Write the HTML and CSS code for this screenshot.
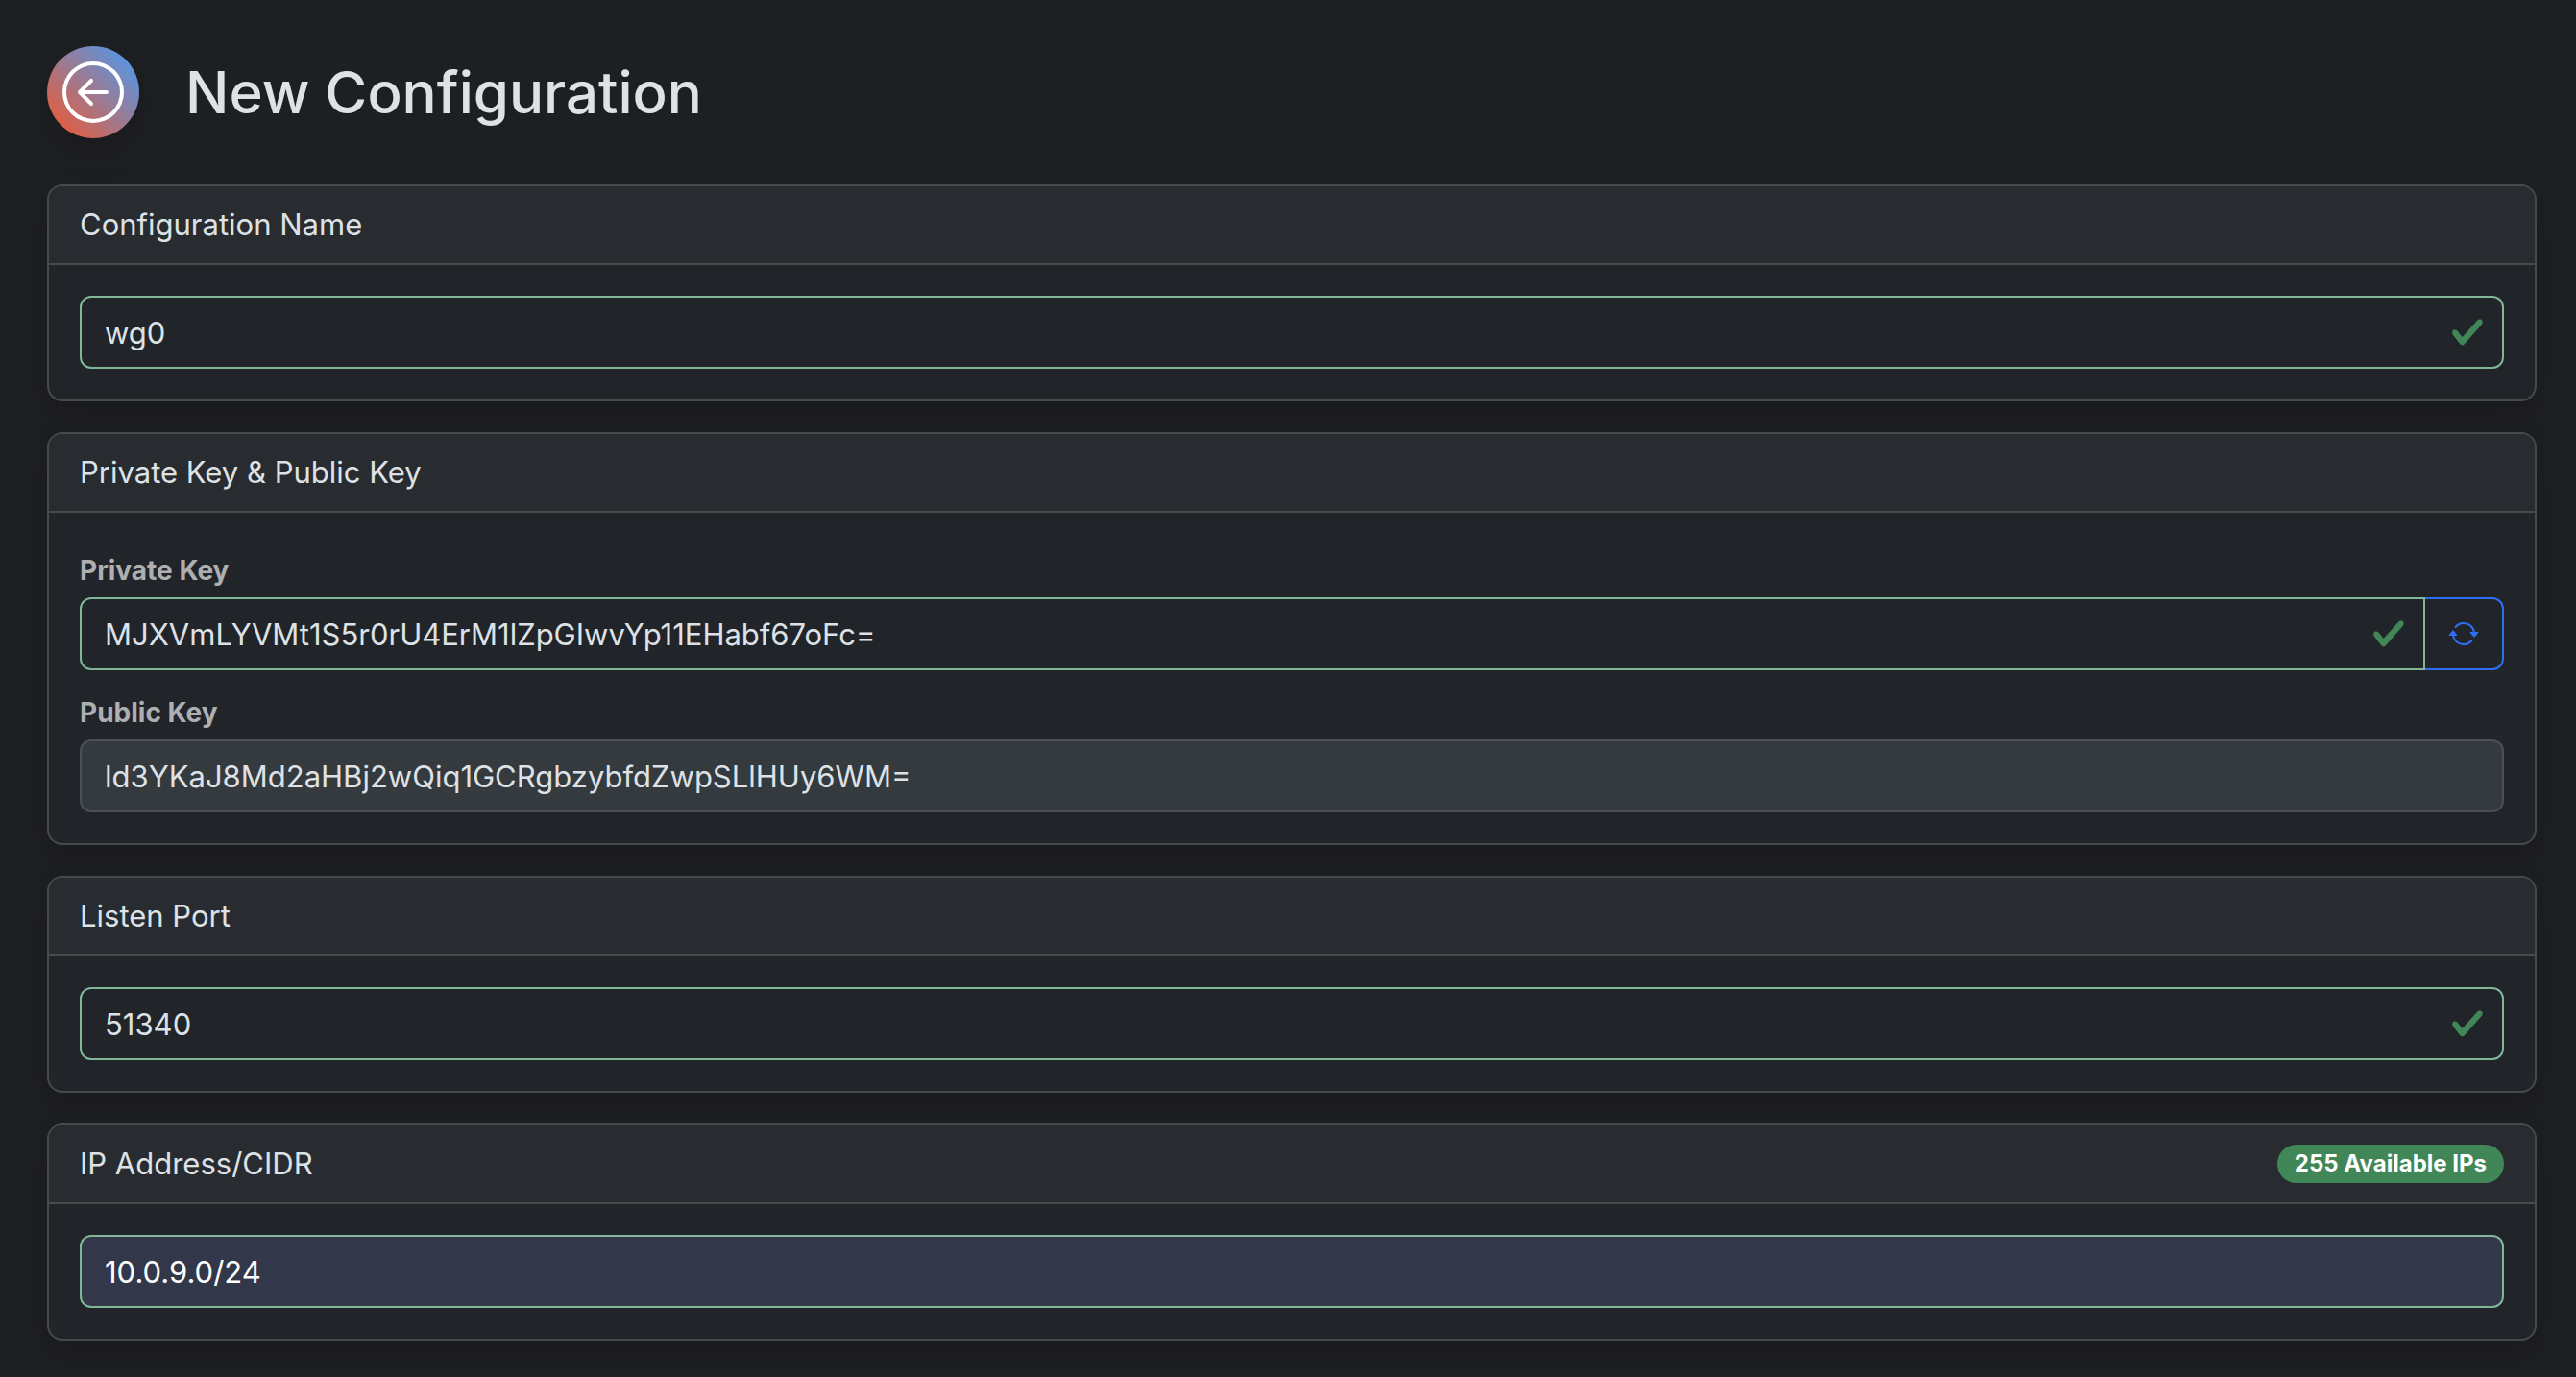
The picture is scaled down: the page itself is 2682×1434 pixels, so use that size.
FILE: index.html
```html
<!DOCTYPE html>
<html lang="en">
<head>
    <meta charset="UTF-8">
    <meta name="viewport" content="width=device-width, initial-scale=1.0">
    <title>New Configuration</title>
    <link rel="stylesheet" href="styles.css">
</head>
<body>
    <main class="container">
        <div class="page-header">
            <a href="#" class="back-btn" aria-label="Back">
                <svg viewBox="0 0 16 16" fill="currentColor">
                    <path fill-rule="evenodd" d="M1 8a7 7 0 1 0 14 0A7 7 0 0 0 1 8m15 0A8 8 0 1 1 0 8a8 8 0 0 1 16 0m-4.5-.5a.5.5 0 0 1 0 1H5.707l2.147 2.146a.5.5 0 0 1-.708.708l-3-3a.5.5 0 0 1 0-.708l3-3a.5.5 0 1 1 .708.708L5.707 7.5z"/>
                </svg>
            </a>
            <h1>New Configuration</h1>
        </div>

        <form class="config-form">
            <div class="card">
                <div class="card-header">
                    <label for="configurationName">Configuration Name</label>
                </div>
                <div class="card-body">
                    <input type="text" id="configurationName" class="form-control is-valid" value="wg0">
                </div>
            </div>

            <div class="card">
                <div class="card-header">Private Key &amp; Public Key</div>
                <div class="card-body key-fields">
                    <div>
                        <label for="privateKey" class="key-label">Private Key</label>
                        <div class="input-group">
                            <input type="text" id="privateKey" class="form-control is-valid" value="MJXVmLYVMt1S5r0rU4ErM1lZpGIwvYp11EHabf67oFc=">
                            <button type="button" class="refresh-btn" aria-label="Regenerate Private Key">
                                <svg viewBox="0 0 16 16" fill="currentColor">
                                    <path d="M11.534 7h3.932a.25.25 0 0 1 .192.41l-1.966 2.36a.25.25 0 0 1-.384 0l-1.966-2.36a.25.25 0 0 1 .192-.41m-11 2h3.932a.25.25 0 0 0 .192-.41L2.692 6.23a.25.25 0 0 0-.384 0L.342 8.59A.25.25 0 0 0 .534 9"/>
                                    <path fill-rule="evenodd" d="M8 3c-1.552 0-2.94.707-3.857 1.818a.5.5 0 1 1-.771-.636A6.002 6.002 0 0 1 13.917 7H12.9A5 5 0 0 0 8 3M3.1 9a5.002 5.002 0 0 0 8.757 2.182.5.5 0 1 1 .771.636A6.002 6.002 0 0 1 2.083 9z"/>
                                </svg>
                            </button>
                        </div>
                    </div>
                    <div>
                        <label for="publicKey" class="key-label">Public Key</label>
                        <input type="text" id="publicKey" class="form-control" value="ld3YKaJ8Md2aHBj2wQiq1GCRgbzybfdZwpSLlHUy6WM=" disabled>
                    </div>
                </div>
            </div>

            <div class="card">
                <div class="card-header">
                    <label for="listenPort">Listen Port</label>
                </div>
                <div class="card-body">
                    <input type="number" id="listenPort" class="form-control is-valid" min="1" max="65535" value="51340">
                </div>
            </div>

            <div class="card">
                <div class="card-header">
                    <label for="address">IP Address/CIDR</label>
                    <span class="badge">255 Available IPs</span>
                </div>
                <div class="card-body">
                    <input type="text" id="address" class="form-control autofilled" value="10.0.9.0/24">
                </div>
            </div>
        </form>
    </main>
</body>
</html>
```
FILE: styles.css
```css
* {
    box-sizing: border-box;
}
body {
    margin: 0;
    background-color: #1e1f22;
    color: #dee2e6;
    font-family: Inter, "Liberation Sans", sans-serif;
    font-size: 31px;
    line-height: 48px;
}
.container {
    padding: 48px 41px 38px 49px;
}
.page-header {
    display: flex;
    align-items: center;
    gap: 48px;
    margin-bottom: 48px;
}
.page-header h1 {
    margin: 0;
    font-size: 60px;
    font-weight: 500;
    line-height: 76px;
}
.back-btn {
    display: flex;
    align-items: center;
    justify-content: center;
    width: 96px;
    height: 96px;
    border-radius: 50%;
    color: #fff;
    background: linear-gradient(45deg, #e55c3c 10%, #5597e6 90%);
    box-shadow: 0 16px 32px rgba(0, 0, 0, 0.15);
}
.back-btn svg {
    width: 64px;
    height: 64px;
}
.config-form {
    display: flex;
    flex-direction: column;
    gap: 32px;
}
.card {
    background-color: #212529;
    border: 2px solid #47494c;
    border-radius: 16px;
    box-shadow: 0 16px 32px rgba(0, 0, 0, 0.15);
}
.card-header {
    display: flex;
    align-items: center;
    justify-content: space-between;
    padding: 16px 32px;
    background-color: #282c30;
    border-bottom: 2px solid #47494c;
    border-radius: 14px 14px 0 0;
}
.card-body {
    padding: 32px;
}
.key-fields {
    display: flex;
    flex-direction: column;
    gap: 16px;
}
.key-label {
    display: block;
    padding: 4px 0;
    font-size: 28px;
    font-weight: 700;
    color: #adafb1;
}
.form-control {
    display: block;
    width: 100%;
    height: 76px;
    padding: 12px 24px;
    border: 2px solid #495057;
    border-radius: 12px;
    background-color: #212529;
    color: #dee2e6;
    font: inherit;
    appearance: none;
}
.form-control:disabled {
    background-color: #343a3e;
    opacity: 1;
}
.form-control::-webkit-inner-spin-button {
    appearance: none;
}
.is-valid {
    padding-right: 72px;
    border-color: #81b698;
    background-image: url("data:image/svg+xml,%3Csvg xmlns='http://www.w3.org/2000/svg' viewBox='0 0 8 8'%3E%3Cpath fill='%23418657' d='M2.3 6.73.6 4.53c-.4-1.04.46-1.4 1.1-.8l1.1 1.4 3.4-3.8c.6-.63 1.6-.27 1.2.7l-4 4.6c-.43.5-.8.4-1.1.1z'/%3E%3C/svg%3E");
    background-repeat: no-repeat;
    background-position: right 18px center;
    background-size: 36px 36px;
}
.autofilled {
    border-color: #81b698;
    background-color: #323849;
    color: #fff;
}
.input-group {
    display: flex;
}
.input-group .form-control {
    flex: 1;
    min-width: 0;
    border-radius: 12px 0 0 12px;
}
.refresh-btn {
    display: flex;
    align-items: center;
    padding: 12px 24px;
    border: 2px solid #2f6ef6;
    border-left: none;
    border-radius: 0 12px 12px 0;
    background: none;
    color: #2f6ef6;
    cursor: pointer;
}
.refresh-btn:hover {
    background-color: #2f6ef6;
    color: #fff;
}
.refresh-btn svg {
    width: 32px;
    height: 32px;
}
.badge {
    padding: 8px 18px;
    border-radius: 20px;
    background-color: #418657;
    color: #fff;
    font-size: 24px;
    font-weight: 700;
    line-height: 24px;
}
```
